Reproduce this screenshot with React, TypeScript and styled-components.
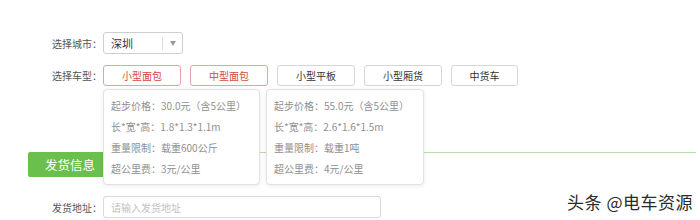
import React from "react";
import styled, { createGlobalStyle } from "styled-components";

const GlobalStyle = createGlobalStyle`
  html, body {
    margin: 0;
    padding: 0;
    background: #fff;
  }
  body {
    font-family: "Noto Sans CJK SC", "Noto Sans", sans-serif;
    overflow: hidden;
  }
`;

const Page = styled.div`
  position: relative;
  width: 700px;
  height: 220px;
  padding-top: 32px;
  box-sizing: border-box;
`;

const FormRow = styled.div<{ $top?: number }>`
  display: flex;
  align-items: center;
  padding-left: 52px;
  margin-top: ${(p) => p.$top ?? 0}px;
`;

const Label = styled.span`
  width: 51px;
  font-size: 10px;
  color: #555;
  white-space: nowrap;
`;

const Select = styled.div`
  display: flex;
  align-items: center;
  width: 80px;
  height: 22px;
  box-sizing: border-box;
  border: 1px solid #cfcfcf;
  border-radius: 3px;
  background: #fff;
`;

const SelectValue = styled.span`
  flex: 1;
  padding-left: 7px;
  font-size: 11px;
  color: #333;
`;

const SelectDivider = styled.span`
  width: 1px;
  height: 13px;
  background: #ddd;
`;

const SelectArrow = styled.span`
  width: 19px;
  display: flex;
  justify-content: center;
  &::after {
    content: "";
    border-left: 3.5px solid transparent;
    border-right: 3.5px solid transparent;
    border-top: 5px solid #9a9a9a;
  }
`;

const Options = styled.div`
  position: relative;
  display: flex;
  gap: 9px;
`;

const OptionButton = styled.button<{ $active?: boolean; $width?: number }>`
  width: ${(p) => p.$width ?? 78}px;
  height: 21px;
  padding: 0;
  box-sizing: border-box;
  border: 1px solid ${(p) => (p.$active ? "#e4a3a3" : "#d6d6d6")};
  border-radius: 3px;
  background: #fff;
  font-family: inherit;
  font-size: 10px;
  color: ${(p) => (p.$active ? "#d8463f" : "#333")};
`;

const Tip = styled.div<{ $left: number; $width: number }>`
  position: absolute;
  top: 24px;
  left: ${(p) => p.$left}px;
  width: ${(p) => p.$width}px;
  height: 96px;
  box-sizing: border-box;
  padding: 5px 0 0 7px;
  border: 1px solid #e2e2e2;
  border-radius: 4px;
  background: #fff;
  box-shadow: 0 1px 4px rgba(0, 0, 0, 0.08);
  z-index: 2;
`;

const TipLine = styled.div`
  height: 21px;
  line-height: 21px;
  font-size: 10px;
  color: #8f8f8f;
  white-space: nowrap;
`;

const Spacer = styled.div`
  height: 66px;
`;

const Section = styled.div`
  display: flex;
  align-items: flex-start;
  padding: 0 4px 0 28px;
`;

const SectionTitle = styled.div`
  width: 82px;
  height: 25px;
  line-height: 25px;
  padding-left: 17px;
  box-sizing: border-box;
  border-radius: 2px;
  background: #6bbf4c;
  color: #fff;
  font-size: 12.5px;
`;

const SectionLine = styled.div`
  flex: 1;
  height: 0;
  border-top: 1px solid #b9dcaa;
`;

const TextInput = styled.input`
  width: 278px;
  height: 22px;
  box-sizing: border-box;
  padding: 0 7px;
  border: 1px solid #d9d9d9;
  border-radius: 3px;
  font-family: inherit;
  font-size: 10px;
  outline: none;
  &::placeholder {
    color: #c2c2c2;
  }
`;

const Watermark = styled.div`
  position: absolute;
  right: 7px;
  top: 189px;
  font-size: 17px;
  color: #2a2a2a;
  letter-spacing: 0.5px;
  text-shadow: 0 0 2px #fff;
`;

const vans = [
  { name: "小型面包", active: true },
  { name: "中型面包", active: true },
  { name: "小型平板" },
  { name: "小型厢货" },
  { name: "中货车", width: 67 },
];

const tips = [
  {
    left: 0,
    width: 157,
    lines: ["起步价格：30.0元（含5公里）", "长*宽*高：1.8*1.3*1.1m", "重量限制：载重600公斤", "超公里费：3元/公里"],
  },
  {
    left: 163,
    width: 158,
    lines: ["起步价格：55.0元（含5公里）", "长*宽*高：2.6*1.6*1.5m", "重量限制：载重1吨", "超公里费：4元/公里"],
  },
];

export default function App() {
  return (
    <Page>
      <GlobalStyle />
      <FormRow>
        <Label>选择城市：</Label>
        <Select>
          <SelectValue>深圳</SelectValue>
          <SelectDivider />
          <SelectArrow />
        </Select>
      </FormRow>
      <FormRow $top={11}>
        <Label>选择车型：</Label>
        <Options>
          {vans.map((v) => (
            <OptionButton key={v.name} $active={v.active} $width={v.width}>
              {v.name}
            </OptionButton>
          ))}
          {tips.map((t, i) => (
            <Tip key={i} $left={t.left} $width={t.width}>
              {t.lines.map((l) => (
                <TipLine key={l}>{l}</TipLine>
              ))}
            </Tip>
          ))}
        </Options>
      </FormRow>
      <Spacer />
      <Section>
        <SectionTitle>发货信息</SectionTitle>
        <SectionLine />
      </Section>
      <FormRow $top={19}>
        <Label>发货地址：</Label>
        <TextInput placeholder="请输入发货地址" />
      </FormRow>
      <Watermark>头条 @电车资源</Watermark>
    </Page>
  );
}
